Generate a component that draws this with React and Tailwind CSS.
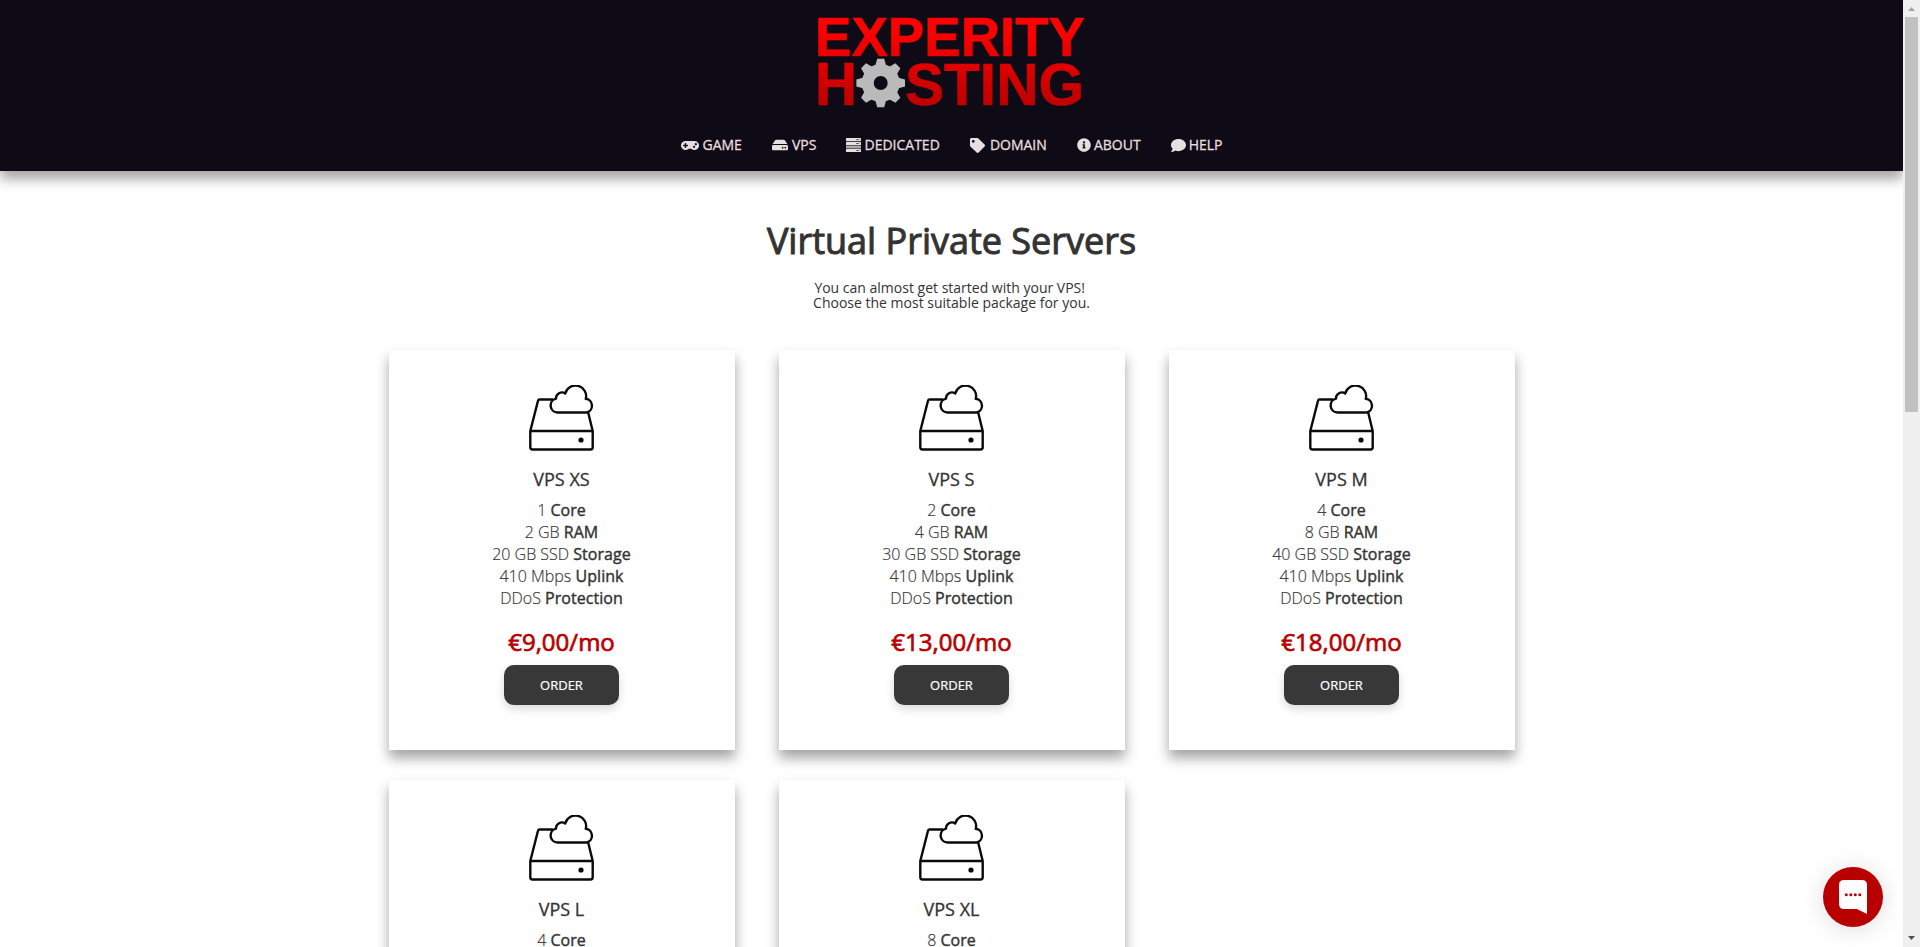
import { FaComment, FaGamepad, FaHdd, FaInfoCircle, FaTag } from 'react-icons/fa'

const NAV_ITEMS = [
  { label: 'GAME', Icon: FaGamepad, icon: 'w-[18px] h-[15px] mr-px' },
  { label: 'VPS', Icon: FaHdd, icon: 'w-4 h-4 mr-px' },
  { label: 'DEDICATED', Icon: RackIcon, icon: 'w-[15px] h-[14px]' },
  { label: 'DOMAIN', Icon: FaTag, icon: 'w-[15px] h-[15px] mr-[2px]' },
  { label: 'ABOUT', Icon: FaInfoCircle, icon: 'w-[14px] h-[14px]' },
  { label: 'HELP', Icon: FaComment, icon: 'w-[15px] h-[15px]' },
]

const PLANS = [
  { name: 'VPS XS', cores: 1, ram: 2, storage: 20, price: '9,00' },
  { name: 'VPS S', cores: 2, ram: 4, storage: 30, price: '13,00' },
  { name: 'VPS M', cores: 4, ram: 8, storage: 40, price: '18,00' },
  { name: 'VPS L', cores: 4, ram: 16, storage: 80, price: '26,00' },
  { name: 'VPS XL', cores: 8, ram: 32, storage: 160, price: '45,00' },
]

const TEETH = [0, 45, 90, 135, 180, 225, 270, 315]

// Four stacked server units
function RackIcon({ className }) {
  return (
    <svg viewBox="0 0 15 14" fill="currentColor" className={className}>
      <rect width="15" height="3.2" rx="0.6" />
      <rect y="4" width="15" height="3" rx="0.6" />
      <rect y="7.600" width="15" height="2.600" rx="0.6" opacity="0.75" />
      <rect y="10.800" width="15" height="3.2" rx="0.6" />
      <g fill="#0f0b16" opacity="0.6">
        <rect x="10" y="1.200" width="3.500" height="0.9" />
        <rect x="10" y="5.100" width="3.500" height="0.9" />
        <rect x="10" y="12" width="3.500" height="0.9" />
      </g>
    </svg>
  )
}

function Logo() {
  return (
    <svg width="300" height="120" viewBox="0 0 300 120" role="img" aria-label="Experity Hosting" className="block">
      <defs>
        <linearGradient id="red" gradientUnits="userSpaceOnUse" x1="0" y1="17" x2="0" y2="105">
          <stop offset="0.15" stopColor="#ff0000" />
          <stop offset="1" stopColor="#bd0000" />
        </linearGradient>
      </defs>
      <g fill="url(#red)" stroke="url(#red)" strokeWidth="0.6" className="font-['Liberation_Sans'] font-bold">
        <text x="15" y="56.300" fontSize="56" textLength="270" lengthAdjust="spacingAndGlyphs">EXPERITY</text>
        <text x="15" y="104.500" fontSize="61" textLength="42" lengthAdjust="spacingAndGlyphs">H</text>
        <text x="105" y="104.500" fontSize="60" textLength="179" lengthAdjust="spacingAndGlyphs">STING</text>
      </g>
      <g transform="translate(80.7 83)" fill="#bababa">
        <path
          fillRule="evenodd"
          d="M0-19a19 19 0 1 0 0 38a19 19 0 1 0 0-38zM0-7a7 7 0 1 1 0 14a7 7 0 1 1 0-14z"
        />
        {TEETH.map((a) => (
          <path key={a} d="M-5.500-17L-3.500-24.300H3.500L5.500-17z" transform={`rotate(${a})`} />
        ))}
      </g>
    </svg>
  )
}

function DriveIcon() {
  return (
    <svg
      width="66"
      height="66"
      viewBox="0 0 66 66"
      fill="none"
      stroke="#0a0a0a"
      strokeWidth="2.4"
      strokeLinejoin="round"
      className="block"
    >
      <path d="M24 14.500H10.500Q9.300 14.500 9 15.700L1.300 46V62.300Q1.300 64.500 3.500 64.500H61.500Q63.700 64.500 63.700 62.300V46L59.300 28" />
      <path d="M1.300 46H63.700" />
      <path d="M28.500 27.500A7 7 0 0 1 27 13.700A5.900 5.900 0 0 1 36.200 8.500A10.600 10.600 0 0 1 56.800 13.800A7 7 0 0 1 57.800 27.500z" />
      <circle cx="52" cy="55" r="2.600" fill="#0a0a0a" stroke="none" />
    </svg>
  )
}

function Feature({ value, label }) {
  return (
    <li className="h-[22px] leading-[22px] whitespace-nowrap">
      {value} <b className="font-normal tracking-[0.05px] [-webkit-text-stroke:0.4px_#333]">{label}</b>
    </li>
  )
}

function PlanCard({ plan }) {
  return (
    <article className="flex h-[400px] w-[346px] flex-col items-center bg-white pt-[35px] text-[#333] shadow-[0_8px_12px_rgba(0,0,0,0.36)]">
      <DriveIcon />
      <h2 className="mt-[16px] text-[18px] leading-[25px] [-webkit-text-stroke:0.3px_#333]">{plan.name}</h2>
      <ul className="mt-[7px] text-center text-[16px] font-light [-webkit-text-stroke:0.15px_#333]">
        <Feature value={plan.cores} label="Core" />
        <Feature value={`${plan.ram} GB`} label="RAM" />
        <Feature value={`${plan.storage} GB SSD`} label="Storage" />
        <Feature value="410 Mbps" label="Uplink" />
        <Feature value="DDoS" label="Protection" />
      </ul>
      <p className="mt-[16px] text-[24px] leading-[34px] text-[#b90000] [-webkit-text-stroke:0.7px_#b90000]">
        €{plan.price}/mo
      </p>
      <button
        type="button"
        className="mt-[6px] h-10 w-[115px] rounded-[10px] bg-[#383838] pt-px text-[13px] text-white shadow-[0_4px_10px_rgba(0,0,0,0.15)] [-webkit-text-stroke:0.2px_#fff]"
      >
        ORDER
      </button>
    </article>
  )
}

function Scrollbar() {
  return (
    <div className="flex w-[17px] shrink-0 flex-col items-center bg-[#f0f0f0]">
      <svg width="17" height="17" viewBox="0 0 17 17" className="shrink-0">
        <path d="M5 11L8.500 7L12 11z" fill="#a3a3a3" />
      </svg>
      <div className="h-[395px] w-[13px] bg-[#c1c1c1]" />
      <svg width="17" height="17" viewBox="0 0 17 17" className="mt-auto shrink-0">
        <path d="M5 6H12L8.500 10z" fill="#505050" />
      </svg>
    </div>
  )
}

export default function App() {
  return (
    <div className="flex h-[947px] overflow-hidden bg-white font-['Open_Sans',sans-serif]">
      <div className="relative min-w-0 flex-1 overflow-hidden">
        <header className="flex h-[171px] flex-col items-center bg-[#0f0b16] shadow-[0_8px_12px_rgba(0,0,0,0.36)]">
          <div className="-ml-[3px]">
            <Logo />
          </div>
          <nav className="mt-[15px] flex w-[542px] justify-between">
            {NAV_ITEMS.map(({ label, Icon, icon }) => (
              <a
                key={label}
                href="#"
                className="flex items-center gap-[3px] text-[14px] leading-[20px] whitespace-nowrap text-[#e6dfdf] [-webkit-text-stroke:0.3px_#e6dfdf]"
              >
                <Icon className={icon} />
                {label}
              </a>
            ))}
          </nav>
        </header>

        <main className="flex flex-col items-center">
          <h1 className="mt-[45px] text-[36px] leading-[50px] text-[#333] [-webkit-text-stroke:1px_#333]">
            Virtual Private Servers
          </h1>
          <p className="mt-[14px] text-center text-[14px] leading-[15px] text-[#333]">
            You can almost get started with your VPS!&nbsp;
            <br />
            Choose the most suitable package for you.
          </p>
          <section className="mt-[40px] grid w-[1126px] grid-cols-3 gap-x-[44px] gap-y-[30px]">
            {PLANS.map((plan) => (
              <PlanCard key={plan.name} plan={plan} />
            ))}
          </section>
        </main>

        {/* Live chat launcher */}
        <button
          type="button"
          aria-label="Chat"
          className="absolute right-5 bottom-5 flex size-[60px] items-center justify-center rounded-full bg-[#b90000] shadow-[0_2px_24px_rgba(0,0,0,0.14)]"
        >
          <svg width="28" height="34" viewBox="0 0 28 34">
            <path d="M5 0H23Q28 0 28 5V34L18 29H5Q0 29 0 24V5Q0 0 5 0z" fill="#fff" />
            <g fill="#b90000">
              <circle cx="7.300" cy="14.700" r="1.500" />
              <circle cx="11.800" cy="14.700" r="1.500" />
              <circle cx="16.300" cy="14.700" r="1.500" />
              <circle cx="20.800" cy="14.700" r="1.500" />
            </g>
          </svg>
        </button>
      </div>
      <Scrollbar />
    </div>
  )
}
